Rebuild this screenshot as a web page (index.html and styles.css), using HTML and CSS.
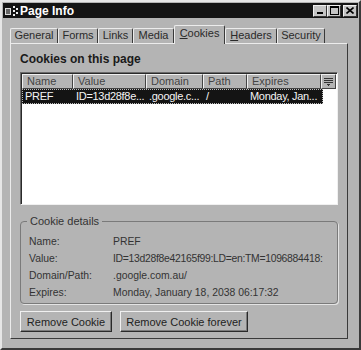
FILE: index.html
```html
<!DOCTYPE html>
<html lang="en">
  <head>
    <meta charset="UTF-8" />
    <title>Page Info</title>
    <link rel="stylesheet" href="styles.css">
  </head>
  <body>
    <div class="window">
      <div class="titlebar">
        <span class="appicon">
          <svg width="14" height="12" viewBox="0 0 14 12">
            <rect x="0" y="3" width="6" height="7" fill="#ddd" />
            <rect x="1" y="4" width="4" height="5" fill="#666" />
            <path d="M8 1h2v2h-2zM11 3h2v2h-2zM8 5h2v2h-2zM11 7h2v2h-2zM8 9h2v2h-2z" fill="#eee" />
          </svg>
        </span>
        <span class="title">Page Info</span>
        <span class="controls">
          <span class="ctl"><svg width="8" height="7" viewBox="0 0 8 7"><rect x="1" y="5" width="6" height="2" fill="#000" /></svg></span>
          <span class="ctl"><svg width="9" height="9" viewBox="0 0 9 9"><rect x="0.5" y="0.5" width="8" height="8" fill="none" stroke="#000" /><rect x="0" y="0" width="9" height="2" fill="#000" /></svg></span>
          <span class="ctl close"><svg width="8" height="7" viewBox="0 0 8 7"><path d="M0.5 0.5L7.5 6.5M7.5 0.5L0.5 6.5" stroke="#000" stroke-width="1.6" /></svg></span>
        </span>
      </div>

      <div class="tabs">
        <span class="tab t-general">General</span>
        <span class="tab t-forms">Forms</span>
        <span class="tab t-links">Links</span>
        <span class="tab t-media">Media</span>
        <span class="tab t-cookies active"><u>C</u>ookies</span>
        <span class="tab t-headers"><u>H</u>eaders</span>
        <span class="tab t-security">Security</span>
      </div>

      <div class="panel">
        <h2 class="heading">Cookies on this page</h2>

        <div class="list">
          <div class="head">
            <span class="col c-name">Name</span>
            <span class="col c-value">Value</span>
            <span class="col c-domain">Domain</span>
            <span class="col c-path">Path</span>
            <span class="col c-exp">Expires</span>
            <span class="col c-pick">
              <svg width="9" height="8" viewBox="0 0 9 8"><path d="M0 0h9v1h-9zM0 2h9v1h-9zM0 4h9v1h-9zM3 6h3v1h-3zM4 7h1v1h-1z" fill="#333" /></svg>
            </span>
          </div>
          <div class="row selected">
            <span class="cell c-name">PREF</span>
            <span class="cell c-value">ID=13d28f8e...</span>
            <span class="cell c-domain">.google.c...</span>
            <span class="cell c-path">/</span>
            <span class="cell c-exp">Monday, Jan...</span>
          </div>
        </div>

        <fieldset class="details">
          <legend>Cookie details</legend>
          <div class="grid">
            <span>Name:</span><span>PREF</span>
            <span>Value:</span><span class="long">ID=13d28f8e42165f99:LD=en:TM=1096884418:</span>
            <span>Domain/Path:</span><span>.google.com.au/</span>
            <span>Expires:</span><span>Monday, January 18, 2038 06:17:32</span>
          </div>
        </fieldset>

        <div class="buttons">
          <button class="btn b-remove">Remove Cookie</button>
          <button class="btn b-forever">Remove Cookie forever</button>
        </div>
      </div>
    </div>
  </body>
</html>
```

FILE: styles.css
```css
* {
  margin: 0;
  padding: 0;
  box-sizing: border-box;
}

body {
  background: #b4b4b4;
  font: 11px "Liberation Sans", Arial, sans-serif;
  color: #1a1a1a;
}

.window {
  width: 361px;
  height: 350px;
  background: #b4b4b4;
  border: 2px solid;
  border-color: #e6e6e6 #3a3a3a #3a3a3a #e6e6e6;
  padding: 1px;
}

.titlebar {
  height: 15px;
  background: #141414;
  display: flex;
  align-items: center;
  padding: 0 1px 0 2px;
}

.appicon {
  display: flex;
  width: 15px;
}

.title {
  color: #fff;
  font-weight: bold;
  font-size: 12px;
  flex: 1;
}

.controls {
  display: flex;
}

.ctl {
  width: 14px;
  height: 12px;
  background: #c4c4c4;
  border: 1px solid;
  border-color: #f0f0f0 #333 #333 #f0f0f0;
  display: flex;
  align-items: center;
  justify-content: center;
}

.ctl.close {
  margin-left: 2px;
}

.tabs {
  display: flex;
  align-items: flex-end;
  height: 25px;
  padding-left: 7px;
  position: relative;
  z-index: 1;
}

.tab {
  height: 15px;
  border: 1px solid;
  border-bottom: none;
  border-color: #ececec #3a3a3a #3a3a3a #ececec;
  border-radius: 2px 2px 0 0;
  color: #2a2a2a;
  line-height: 13px;
  text-align: center;
}

.t-general { width: 48px; }
.t-forms { width: 40px; }
.t-links { width: 35px; }
.t-media { width: 41px; }
.t-cookies { width: 51px; }
.t-headers { width: 52px; }
.t-security { width: 48px; }

.tab.active {
  height: 19px;
  margin-bottom: -1px;
  line-height: 14px;
  background: #b4b4b4;
}

.panel {
  margin: 0 10px 0 7px;
  height: 296px;
  border: 1px solid;
  border-color: #ececec #3a3a3a #3a3a3a #ececec;
  padding: 8px 9px 0 9px;
}

.heading {
  font-size: 12px;
  font-weight: bold;
  color: #1a1a1a;
  height: 15px;
  line-height: 15px;
  margin-bottom: 5px;
}

.list {
  height: 133px;
  background: #fff;
  border: 1px solid;
  border-color: #6a6a6a #f0f0f0 #f0f0f0 #6a6a6a;
  box-shadow: inset 1px 1px 0 #2a2a2a;
  padding: 1px 1px 0 1px;
}

.head {
  display: flex;
  height: 15px;
}

.col {
  background: #b4b4b4;
  border: 1px solid;
  border-color: #f0f0f0 #444 #444 #f0f0f0;
  padding-left: 4px;
  line-height: 13px;
  color: #444;
}

.c-name { width: 51px; }
.c-value { width: 73px; }
.c-domain { width: 57px; }
.c-path { width: 44px; }
.c-exp { width: 74px; }

.c-pick {
  width: 15px;
  display: flex;
  align-items: center;
  justify-content: center;
  padding: 0;
}

.row {
  display: flex;
  height: 15px;
  line-height: 14px;
}

.row.selected {
  background: #141414;
  color: #f4f4f4;
  outline: 1px dotted #bbb;
  outline-offset: -1px;
  width: 301px;
}

.cell {
  padding-left: 3px;
  white-space: nowrap;
  overflow: hidden;
  letter-spacing: -0.3px;
}

.details {
  margin-top: 10px;
  border: 1px solid #7a7a7a;
  border-radius: 4px;
  height: 89px;
  padding: 0 8px;
  box-shadow: 1px 1px 0 #e4e4e4;
}

.details legend {
  padding: 0 3px;
  margin-left: -2px;
  line-height: 13px;
  color: #333;
}

.grid {
  display: grid;
  grid-template-columns: 84px 1fr;
  row-gap: 4px;
  line-height: 13px;
  color: #333;
  margin-top: 7px;
  white-space: nowrap;
  font-size: 10.4px;
}

.grid .long {
  letter-spacing: -0.3px;
}

.buttons {
  display: flex;
  gap: 8px;
  margin-top: 7px;
}

.btn {
  font: 11px "Liberation Sans", Arial, sans-serif;
  color: #222;
  height: 21px;
  background: #b4b4b4;
  border: 1px solid;
  border-color: #f0f0f0 #2a2a2a #2a2a2a #f0f0f0;
  box-shadow: inset -1px -1px 0 #7a7a7a;
}

.b-remove { width: 92px; }
.b-forever { width: 128px; }
```
